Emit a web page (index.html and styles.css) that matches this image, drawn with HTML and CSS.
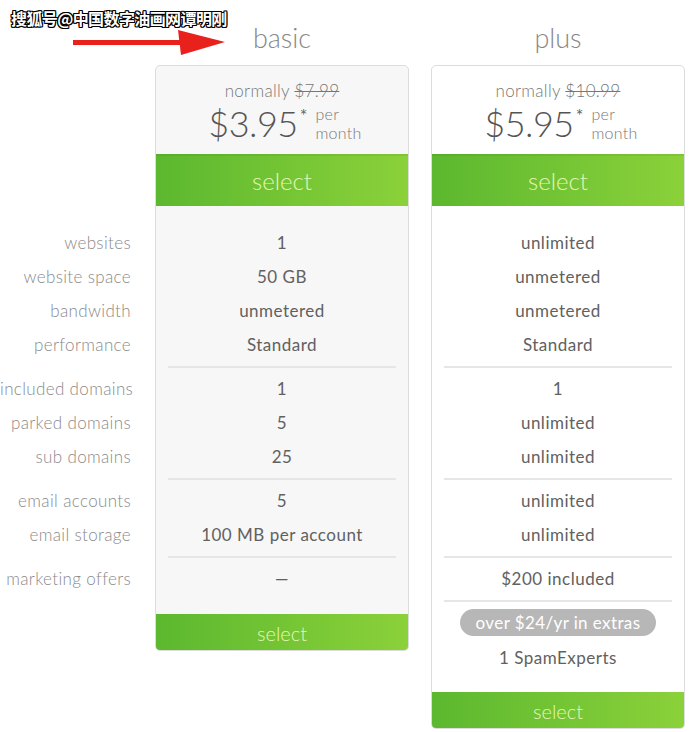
FILE: index.html
```html
<!DOCTYPE html>
<html>
<head>
<meta charset="utf-8">
<link rel="stylesheet" href="styles.css">
</head>
<body>
<div class="watermark">搜狐号@中国数字油画网谭明刚</div>
<svg class="arrow" width="160" height="30" viewBox="0 0 160 30">
  <rect x="0" y="12" width="110" height="5" fill="#e8211d"/>
  <polygon points="105,2 152,14 108,27" fill="#e8211d"/>
</svg>
<div class="page">
  <div class="labels">
    <div class="head-space"></div>
    <div class="group">
      <div class="row">websites</div>
      <div class="row">website space</div>
      <div class="row">bandwidth</div>
      <div class="row">performance</div>
    </div>
    <div class="sep hidden"></div>
    <div class="group">
      <div class="row">included domains</div>
      <div class="row">parked domains</div>
      <div class="row">sub domains</div>
    </div>
    <div class="sep hidden"></div>
    <div class="group">
      <div class="row">email accounts</div>
      <div class="row">email storage</div>
    </div>
    <div class="sep hidden"></div>
    <div class="group">
      <div class="row">marketing offers</div>
    </div>
  </div>

  <div class="plan">
    <div class="plan-title">basic</div>
    <div class="card card-basic">
      <div class="price-box">
        <div class="normally">normally <s>$7.99</s></div>
        <div class="price">
          <span class="amount">$3.95</span><span class="star">*</span>
          <span class="per">per<br>month</span>
        </div>
      </div>
      <div class="btn btn-top">select</div>
      <div class="body">
        <div class="group">
          <div class="row">1</div>
          <div class="row">50 GB</div>
          <div class="row">unmetered</div>
          <div class="row">Standard</div>
        </div>
        <div class="sep"></div>
        <div class="group">
          <div class="row">1</div>
          <div class="row">5</div>
          <div class="row">25</div>
        </div>
        <div class="sep"></div>
        <div class="group">
          <div class="row">5</div>
          <div class="row">100 MB per account</div>
        </div>
        <div class="sep"></div>
        <div class="group">
          <div class="row">—</div>
        </div>
      </div>
      <div class="btn btn-bottom">select</div>
    </div>
  </div>

  <div class="plan">
    <div class="plan-title">plus</div>
    <div class="card card-plus">
      <div class="price-box">
        <div class="normally">normally <s>$10.99</s></div>
        <div class="price">
          <span class="amount">$5.95</span><span class="star">*</span>
          <span class="per">per<br>month</span>
        </div>
      </div>
      <div class="btn btn-top">select</div>
      <div class="body">
        <div class="group">
          <div class="row">unlimited</div>
          <div class="row">unmetered</div>
          <div class="row">unmetered</div>
          <div class="row">Standard</div>
        </div>
        <div class="sep"></div>
        <div class="group">
          <div class="row">1</div>
          <div class="row">unlimited</div>
          <div class="row">unlimited</div>
        </div>
        <div class="sep"></div>
        <div class="group">
          <div class="row">unlimited</div>
          <div class="row">unlimited</div>
        </div>
        <div class="sep"></div>
        <div class="group">
          <div class="row">$200 included</div>
        </div>
        <div class="sep"></div>
        <div class="extras">
          <span class="pill">over $24/yr in extras</span>
          <div class="row">1 SpamExperts</div>
        </div>
      </div>
      <div class="btn btn-bottom">select</div>
    </div>
  </div>
</div>
</body>
</html>
```

FILE: styles.css
```css
html, body {
  margin: 0;
  padding: 0;
  background: #ffffff;
}
body {
  font-family: Lato, "Open Sans", sans-serif;
  color: #616161;
  position: relative;
  width: 700px;
  height: 732px;
  overflow: hidden;
}
.watermark {
  position: absolute;
  left: 11px;
  top: 6px;
  font-family: "Noto Sans CJK SC", sans-serif;
  font-weight: 700;
  font-size: 16px;
  color: #fff;
  letter-spacing: -0.6px;
  text-shadow: 1px 0 0 #000, -1px 0 0 #000, 0 1px 0 #000, 0 -1px 0 #000,
    1px 1px 0 #000, -1px -1px 0 #000, 1px -1px 0 #000, -1px 1px 0 #000;
  z-index: 2;
}
.arrow {
  position: absolute;
  left: 73px;
  top: 28px;
}
.page {
  display: flex;
  align-items: flex-start;
}
.labels {
  width: 131px;
  margin-right: 24px;
  display: flex;
  flex-direction: column;
  text-align: right;
}
.head-space {
  height: 226px;
}
.row {
  height: 34px;
  line-height: 34px;
  font-size: 17px;
  letter-spacing: 0.5px;
  white-space: nowrap;
}
.labels .row {
  font-weight: 300;
  color: #8a8a8a;
  letter-spacing: 0.35px;
}
.sep {
  height: 2px;
  background: #e6e6e6;
  margin: 4px 12px 4px;
}
.sep.hidden {
  background: transparent;
}
.plan {
  width: 254px;
  display: flex;
  flex-direction: column;
}
.plan + .plan {
  margin-left: 22px;
}
.plan-title {
  height: 46px;
  line-height: 38px;
  padding-top: 19px;
  text-align: center;
  font-size: 27px;
  font-weight: 300;
  color: #888;
}
.card {
  border: 1px solid #dcdcdc;
  border-radius: 5px;
  display: flex;
  flex-direction: column;
  overflow: hidden;
}
.card-basic {
  background: #f7f7f7;
}
.card-plus {
  background: #ffffff;
}
.price-box {
  height: 88px;
  display: flex;
  flex-direction: column;
  align-items: center;
  padding-top: 14px;
  box-sizing: border-box;
}
.normally {
  font-size: 17px;
  font-weight: 300;
  color: #777;
  line-height: 22px;
  letter-spacing: 0.3px;
}
.normally s {
  text-decoration-thickness: 1px;
}
.price {
  display: flex;
  align-items: flex-start;
  margin-left: 6px;
}
.amount {
  font-size: 36px;
  font-weight: 300;
  color: #555;
  line-height: 42px;
  letter-spacing: -0.5px;
}
.star {
  font-size: 18px;
  line-height: 18px;
  margin-top: 4px;
  margin-left: 2px;
  color: #666;
}
.per {
  font-size: 16px;
  font-weight: 300;
  color: #777;
  line-height: 19px;
  margin-left: 8px;
  margin-top: 2px;
  letter-spacing: 0.3px;
}
.btn {
  background: linear-gradient(to right, #5cb82f, #8bd13a);
  color: #e4f7b5;
  text-align: center;
  font-weight: 300;
}
.btn-top {
  height: 52px;
  line-height: 54px;
  font-size: 24px;
  box-shadow: inset 0 2px 0 rgba(0,0,0,0.06);
}
.btn-bottom {
  height: 36px;
  line-height: 38px;
  font-size: 20px;
  margin-top: 18px;
}
.body {
  padding-top: 20px;
  display: flex;
  flex-direction: column;
  text-align: center;
}
.extras {
  display: flex;
  flex-direction: column;
  align-items: center;
  padding-top: 3px;
}
.pill {
  display: inline-block;
  background: #b7b7b7;
  color: #fff;
  border-radius: 14px;
  height: 27px;
  line-height: 27px;
  font-size: 17px;
  letter-spacing: 0.4px;
  padding: 0 16px;
  font-weight: 400;
}
.extras .row {
  margin-top: 5px;
}
.card-plus .btn-bottom {
  margin-top: 17px;
}
```
